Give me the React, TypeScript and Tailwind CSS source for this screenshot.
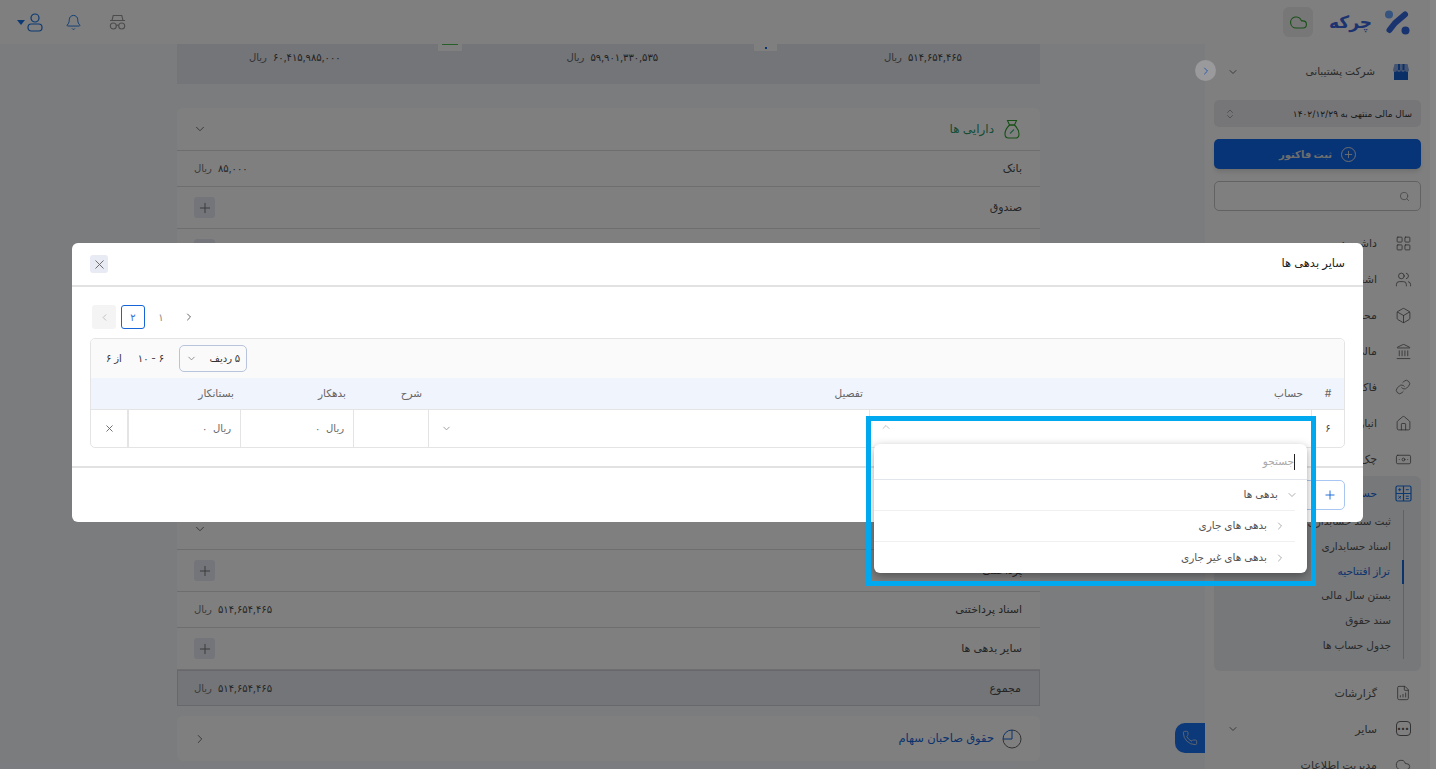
import React from "react";
import { Bell, Box, ChevronDown, ChevronLeft, ChevronRight, ChevronUp, ChevronsUpDown, Cloud, Landmark, LayoutGrid, Link, Banknote, Phone, Plus, Search, Users, X, Home, FileBarChart } from "lucide-react";

const FONT = "font-['Inter','DejaVu_Sans',sans-serif]";

function Row({ label, value, h = "h-[36px]", plus }: { label: string; value?: string; h?: string; plus?: boolean }) {
  return (
    <div className={`${h} flex items-center justify-between border-b border-[#dcdcdc] pr-[18px] pl-[17px] text-[11px] text-[#4a4a4a]`}>
      <span>{label}</span>
      {plus ? (
        <span className="flex h-[21px] w-[21px] items-center justify-center rounded-[3px] bg-[#e8ebf4] text-[#777]">
          <Plus size={16} strokeWidth={1.5} />
        </span>
      ) : (
        <span className="flex items-center gap-[6px] text-[10px]">
          <span>{value}</span>
          <span className="text-[#777]">ریال</span>
        </span>
      )}
    </div>
  );
}

function Nav({ icon, label, active, chev }: { icon: React.ReactNode; label: string; active?: boolean; chev?: boolean }) {
  return (
    <div className={`flex h-[36px] items-center pr-[18px] pl-[22px] text-[11px] ${active ? "text-[#1565d8]" : "text-[#555]"}`}>
      <span className="flex w-[18px] justify-center">{icon}</span>
      <span className="mr-[17px] flex-1">{label}</span>
      {chev && <ChevronDown size={12} className="text-[#777]" />}
    </div>
  );
}

function Sum({ v }: { v: string }) {
  return (
    <span className="flex items-center gap-[6px] text-[10px] text-[#444]">
      <span>{v}</span>
      <span className="text-[#666]">ریال</span>
    </span>
  );
}

function Bag() {
  return (
    <svg width="16" height="20" viewBox="0 0 16 20" fill="none" stroke="#2aa02a" strokeWidth="1.1">
      <path d="M3.5 1.5h9L10.5 6h-5zM5.5 6C3 8.5 1 12 1 15c0 2.5 1.5 4 3.5 4h7c2 0 3.5-1.5 3.5-4 0-3-2-6.5-4.5-9" />
      <path d="M5 6h6" />
      <path d="M6 14.5l4-4" stroke="#3bb77e" />
    </svg>
  );
}

function Logo() {
  return (
    <svg width="26" height="26" viewBox="0 0 26 26">
      <circle cx="5" cy="5.5" r="4" fill="#6aa8ff" />
      <circle cx="21.5" cy="21.5" r="4" fill="#2f66e0" />
      <path d="M21 5.5L11 14L5.5 21" stroke="#3568e0" strokeWidth="6" strokeLinecap="round" strokeLinejoin="round" fill="none" />
    </svg>
  );
}

function Spy() {
  return (
    <svg width="17" height="16" viewBox="0 0 17 16" fill="none" stroke="#999" strokeWidth="1.1">
      <path d="M3 6.5L4.2 1.5h8.6L14 6.5M1 6.5h15" />
      <circle cx="4.3" cy="12" r="3" />
      <circle cx="12.7" cy="12" r="3" />
      <path d="M7.3 11.5c.8-.5 1.6-.5 2.4 0" />
    </svg>
  );
}

function Person() {
  return (
    <svg width="16" height="19" viewBox="0 0 16 19" fill="none" stroke="#1672e8" strokeWidth="1.2">
      <circle cx="8" cy="5" r="4" />
      <rect x="1" y="11" width="14" height="7" rx="3.2" />
    </svg>
  );
}

function Shop() {
  return (
    <svg width="16" height="16" viewBox="0 0 16 16">
      <rect x="1" y="4" width="14" height="12" fill="#1660d0" />
      <path d="M1.5 0h13L16 6a2 2 0 0 1-4 0 2 2 0 0 1-4 0 2 2 0 0 1-4 0 2 2 0 0 1-4 0z" fill="#8aa8e0" />
      <path d="M5 0h2v6H5zM9.5 0h2v6h-2z" fill="#1660d0" />
    </svg>
  );
}

function CalcGrid() {
  return (
    <svg width="17" height="17" viewBox="0 0 17 17" fill="none" stroke="#1672e8" strokeWidth="1.2">
      <rect x="1" y="1" width="15" height="15" rx="1.5" />
      <path d="M8.5 1v15M1 8.5h15" />
      <path d="M3.2 4.7h3M4.7 3.2v3M10.8 4.7h3M3.4 11l2.6 2.6M6 11l-2.6 2.6M10.8 11.2h3M10.8 13.6h3" strokeWidth="1" />
    </svg>
  );
}

export default function App() {
  return (
    <div dir="rtl" className={`relative flex h-[769px] w-[1436px] overflow-hidden bg-[#f6f8fd] ${FONT}`}>
      <div className="flex h-full w-full flex-col">
        {/* top bar */}
        <header className="flex h-[44px] shrink-0 items-center justify-between bg-white pr-[26px] pl-[17px]">
          <div className="flex items-center">
            <Logo />
            <span className="mr-[12px] w-[40px] whitespace-nowrap text-[17px] leading-none font-bold text-[#3a66e0]">چرکه</span>
            <span className="mr-[19px] flex h-[30px] w-[30px] items-center justify-center rounded-[6px] bg-[#eeeeee]">
              <Cloud size={19} strokeWidth={1.4} className="text-[#2ea02e]" />
            </span>
          </div>
          <div className="flex items-center text-[#1672e8]">
            <Spy />
            <Bell size={17} strokeWidth={1.3} className="mr-[27px]" />
            <span className="mr-[22px] flex items-center">
              <Person />
              <span className="mr-[2px] h-0 w-0 border-x-[4px] border-t-[5px] border-x-transparent border-t-[#1672e8]" />
            </span>
          </div>
        </header>

        <div className="flex min-h-0 flex-1">
          {/* sidebar */}
          <aside className="flex w-[231px] shrink-0 flex-col bg-white pr-[15px] pl-[9px]">
            <div className="flex h-[56px] shrink-0 items-center pr-[12px] pl-[13px] text-[10.5px] text-[#555]">
              <Shop />
              <span className="mr-[18px] flex-1">شرکت پشتیبانی</span>
              <ChevronDown size={12} className="text-[#777]" />
            </div>
            <div className="flex h-[27px] shrink-0 items-center justify-between rounded-[5px] bg-[#ecedf2] pr-[9px] pl-[10px] text-[9px] text-[#333]">
              <span>سال مالی منتهی به ۱۴۰۲/۱۲/۲۹</span>
              <ChevronsUpDown size={12} strokeWidth={1.2} className="text-[#777]" />
            </div>
            <button className="mt-[12px] flex h-[30px] shrink-0 items-center justify-center gap-[9px] rounded-[5px] bg-[#0f68ec] text-[10px] font-bold text-[#ddd] shadow-md">
              <span className="flex h-[15px] w-[15px] items-center justify-center rounded-full border border-[#ddd]"><Plus size={11} strokeWidth={2} /></span>
              <span>ثبت فاکتور</span>
            </button>
            <div className="mt-[12px] flex h-[30px] shrink-0 items-center rounded-[5px] border border-[#c4c4c4] pr-[10px]">
              <Search size={11} className="text-[#999]" />
            </div>
            <div className="-mx-[9px] mt-[14px] flex flex-col">
              <Nav icon={<LayoutGrid size={17} strokeWidth={1.1} />} label="داشبورد" />
              <Nav icon={<Users size={17} strokeWidth={1.1} />} label="اشخاص" />
              <Nav icon={<Box size={17} strokeWidth={1.1} />} label="محصولات" />
              <Nav icon={<Landmark size={17} strokeWidth={1.1} />} label="مالی" />
              <Nav icon={<Link size={16} strokeWidth={1.1} />} label="فاکتور" />
              <Nav icon={<Home size={17} strokeWidth={1.1} />} label="انبار" />
              <Nav icon={<Banknote size={17} strokeWidth={1.1} />} label="چک" />
            </div>
            <div className="-mt-[1px] shrink-0 rounded-[6px] bg-[#eef0f5] pb-[12px]">
              <div className="flex h-[34px] items-center pr-[9px] text-[11px] text-[#1565d8]">
                <CalcGrid />
                <span className="mr-[18px]">حساب داری</span>
              </div>
              <div className="mr-[17px] flex flex-col border-r border-[#c0c4d0] pr-[12px] text-[10.5px] leading-[24.8px] text-[#555]">
                <span>ثبت سند حسابداری</span>
                <span>اسناد حسابداری</span>
                <span className="relative -mr-[13px] border-r-2 border-[#1565d8] pr-[12px] text-[#1565d8]">تراز افتتاحیه</span>
                <span>بستن سال مالی</span>
                <span>سند حقوق</span>
                <span>جدول حساب ها</span>
              </div>
            </div>
            <div className="-mx-[9px] mt-[4px] flex flex-col">
              <Nav icon={<FileBarChart size={16} strokeWidth={1.2} />} label="گزارشات" />
              <Nav icon={<span className="flex h-[15px] w-[15px] items-center justify-center rounded-[4px] border border-[#666] text-[7px] leading-none">•••</span>} label="سایر" chev />
              <Nav icon={<Cloud size={16} strokeWidth={1.2} />} label="مدیریت اطلاعات" />
            </div>
          </aside>

          {/* main */}
          <main className="relative min-w-0 flex-1 pr-[165px] pl-[177px]">
            <div className="flex h-[40px] items-center justify-between bg-[#e7eaf1] pb-[14px] pr-[78px] pl-[72px]">
              <Sum v="۵۱۴,۶۵۴,۴۶۵" />
              <Sum v="۵۹,۹۰۱,۳۳۰,۵۳۵" />
              <Sum v="۶۰,۴۱۵,۹۸۵,۰۰۰" />
            </div>
            <section className="mt-[24px] overflow-hidden rounded-t-[6px] bg-white">
              <div className="flex h-[43px] items-center justify-between border-b border-[#dcdcdc] pr-[20px] pl-[16px]">
                <span className="flex items-center gap-[10px] text-[12px] text-[#2a9a6a]"><Bag />دارایی ها</span>
                <ChevronDown size={14} strokeWidth={1.4} className="text-[#555]" />
              </div>
              <Row label="بانک" value="۸۵,۰۰۰" />
              <Row label="صندوق" plus h="h-[42px]" />
              <Row label="موجودی کالا" plus h="h-[42px]" />
              <Row label="حساب دریافتنی" plus h="h-[42px]" />
              <Row label="پیش پرداخت" plus h="h-[42px]" />
              <Row label="دارایی ثابت" plus h="h-[42px]" />
              <Row label="سایر دارایی ها" plus h="h-[42px]" />
              <Row label="مجموع" value="۸۵,۰۰۰" />
            </section>
            <section className="mt-[33px] bg-white">
              <div className="flex h-[42px] items-center justify-between border-b border-[#dcdcdc] pr-[20px] pl-[16px]">
                <span className="text-[12px] text-[#1565d8]">بدهی ها</span>
                <ChevronDown size={14} strokeWidth={1.4} className="text-[#555]" />
              </div>
              <Row label="پرداختنی" plus h="h-[42px]" />
              <Row label="اسناد پرداختنی" value="۵۱۴,۶۵۴,۴۶۵" />
              <Row label="سایر بدهی ها" plus h="h-[42px]" />
              <div className="flex h-[36px] items-center justify-between border border-[#d0d0d8] bg-[#e7eaf1] pr-[18px] pl-[16px] text-[11px] text-[#4a4a4a]">
                <span>مجموع</span>
                <span className="flex items-center gap-[6px] text-[10px]"><span>۵۱۴,۶۵۴,۴۶۵</span><span className="text-[#777]">ریال</span></span>
              </div>
            </section>
            <section className="mt-[10px] flex h-[45px] items-center justify-between rounded-[6px] bg-white pr-[18px] pl-[16px]">
              <span className="flex items-center gap-[8px] text-[11.5px] text-[#1565d8]">
                <svg width="20" height="20" viewBox="0 0 20 20" fill="none" stroke="#666" strokeWidth="1"><path d="M10 1a9 9 0 1 1-9 9" /><path d="M10 1v9H1a9 9 0 0 1 9-9z" stroke="#1565d8" /></svg>
                حقوق صاحبان سهام
              </span>
              <ChevronRight size={14} strokeWidth={1.4} className="text-[#555]" />
            </section>
            {/* tabs peeking from the scrolled summary */}
            <span className="absolute top-0 left-[438px] flex h-[7px] w-[24px] justify-center bg-white"><span className="h-px w-[16px] bg-[#4cc04c]" /></span>
            <span className="absolute top-0 left-[754px] flex h-[7px] w-[23px] items-center justify-center bg-white"><span className="h-[2px] w-[2px] bg-[#1565d8]" /></span>
          </main>
        </div>
      </div>

      {/* call button */}
      <span className="absolute top-[723px] left-[1175px] flex h-[30px] w-[30px] items-center justify-center rounded-l-[10px] bg-[#1672f5] text-[#ddd]">
        <Phone size={16} strokeWidth={1.2} />
      </span>

      {/* backdrop */}
      <div className="absolute inset-0 bg-black/50" />

      {/* page scrollbar */}
      <span className="absolute inset-y-0 right-0 w-[6px] bg-[#868686]" />

      {/* collapse handle */}
      <span className="absolute top-[60px] left-[1195px] flex h-[21px] w-[21px] items-center justify-center rounded-full bg-[#9a9a9c] text-[#2a5cb0]">
        <ChevronRight size={12} />
      </span>

      {/* modal */}
      <div className="absolute top-[243px] left-[72px] flex h-[279px] w-[1291px] flex-col rounded-[6px] bg-white">
        <div className="flex h-[44px] shrink-0 items-center justify-between border-b-2 border-[#e2e2e2] px-[18px]">
          <span className="text-[11.5px] text-[#222]">سایر بدهی ها</span>
          <span className="flex h-[18px] w-[18px] items-center justify-center rounded-[3px] bg-[#e8ebf4] text-[#666]"><X size={15} strokeWidth={1.5} /></span>
        </div>
        <div className="flex-1 px-[18px]">
          <div dir="ltr" className="mt-[18px] flex h-[24px] items-center pl-[2px] text-[10px] text-[#666]">
            <span className="flex h-[24px] w-[24px] items-center justify-center rounded-[3px] bg-[#f4f4f4] text-[#bbb]"><ChevronLeft size={11} /></span>
            <span className="ml-[5px] flex h-[24px] w-[24px] items-center justify-center rounded-[3px] border border-[#1565d8] text-[#3c6fd8]">۲</span>
            <span className="ml-[4px] flex h-[24px] w-[24px] items-center justify-center text-[#888]">۱</span>
            <span className="ml-[4px] flex h-[24px] w-[24px] items-center justify-center text-[#666]"><ChevronLeft size={12} className="rotate-180" /></span>
          </div>
          <div className="mt-[9px] overflow-hidden rounded-[5px] border border-[#e4e4e4]">
            <div dir="ltr" className="flex h-[39px] items-center bg-[#fafafa] pl-[15px] text-[10px] text-[#333]">
              <span dir="rtl">از ۶</span>
              <span dir="rtl" className="ml-[16px]">۶ - ۱۰</span>
              <span className="ml-[15px] flex h-[27px] w-[68px] items-center justify-between rounded-[5px] border border-[#b8c4dc] px-[6px] text-[10px]">
                <ChevronDown size={11} className="text-[#888]" />
                <span dir="rtl">۵ ردیف</span>
              </span>
            </div>
            <div className="grid h-[32px] grid-cols-[32px_442px_441px_75px_113px_112px_1fr] items-center border-b border-[#e4e4e4] bg-[#f0f4fc] text-[10.5px] text-[#666]">
              <span className="text-center">#</span>
              <span className="pr-[9px]">حساب</span>
              <span className="pr-[7px]">تفصیل</span>
              <span className="pr-[7px]">شرح</span>
              <span className="pr-[8px]">بدهکار</span>
              <span className="pr-[7px]">بستانکار</span>
              <span />
            </div>
            <div className="grid h-[37px] grid-cols-[32px_442px_441px_75px_113px_112px_1fr] text-[10px] text-[#666]">
              <span className="flex items-center justify-center text-[#444]">۶</span>
              <span className="border-r border-[#e4e4e4]" />
              <span className="flex items-center justify-end border-r border-[#e4e4e4] pl-[12px]"><ChevronDown size={11} className="text-[#999]" /></span>
              <span className="border-r border-[#e4e4e4]" />
              <span className="flex items-center border-r border-[#e4e4e4] pr-[9px]">ریال&nbsp;&nbsp;۰</span>
              <span className="flex items-center border-r border-[#e4e4e4] pr-[9px]">ریال&nbsp;&nbsp;۰</span>
              <span className="flex items-center justify-center border-r-2 border-[#e4e4e4] text-[#666]"><X size={11} /></span>
            </div>
          </div>
        </div>
        <div className="flex h-[56px] shrink-0 items-center border-t-2 border-[#e2e2e2] pr-[18px]">
          <span className="flex h-[30px] w-[120px] items-center justify-start rounded-[5px] border border-[#a9c6f2] pr-[7px] text-[#1565d8]">
            <Plus size={14} strokeWidth={1.6} />
          </span>
        </div>
      </div>

      {/* open account dropdown */}
      <ChevronUp size={12} strokeWidth={1.2} className="absolute top-[421px] left-[880px] text-[#999]" />
      <div className="absolute top-[444px] left-[874px] flex h-[129px] w-[433px] flex-col rounded-[6px] bg-white shadow-[0_3px_10px_rgba(0,0,0,0.35)]">
        <div className="flex h-[36px] shrink-0 items-center border-b border-[#e2e4ee] pr-[12px] text-[10.5px] text-[#aaa]">
          <span className="h-[16px] w-px bg-[#222]" />
          <span>جستجو</span>
        </div>
        <div className="mr-[12px] flex h-[31px] items-center border-b border-[#f0f0f0] text-[10.5px] text-[#555]">
          <ChevronDown size={12} strokeWidth={1.2} className="-mr-[3px] text-[#777]" />
          <span className="mr-[8px]">بدهی ها</span>
        </div>
        <div className="mr-[12px] flex h-[31px] items-center border-b border-[#f0f0f0] pr-[9px] text-[10.5px] text-[#555]">
          <ChevronRight size={12} strokeWidth={1.2} className="text-[#777]" />
          <span className="mr-[7px]">بدهی های جاری</span>
        </div>
        <div className="mr-[12px] flex h-[31px] items-center pr-[9px] text-[10.5px] text-[#555]">
          <ChevronRight size={12} strokeWidth={1.2} className="text-[#777]" />
          <span className="mr-[7px]">بدهی های غیر جاری</span>
        </div>
      </div>

      {/* highlight annotation */}
      <div className="pointer-events-none absolute top-[416px] left-[866px] h-[170px] w-[450px] border-[5px] border-[#00a8ef]" />
    </div>
  );
}
